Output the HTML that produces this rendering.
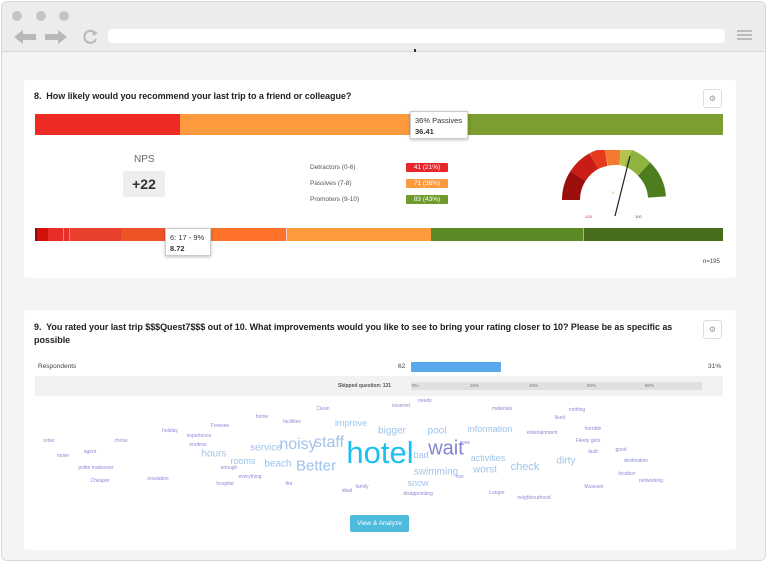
<!DOCTYPE html>
<html><head><meta charset="utf-8"><style>
*{margin:0;padding:0;box-sizing:border-box}
body{width:768px;height:542px;overflow:hidden;background:#fff;font-family:"Liberation Sans",sans-serif;position:relative;color:#333}
.a{position:absolute}
.frame{left:1px;top:1px;width:765px;height:560px;border:1px solid #d8d8d8;border-radius:6px;background:#f4f4f4}
.top{left:2px;top:2px;width:763px;height:50px;background:#ececec;border-bottom:1px solid #d6d6d6;border-radius:5px 5px 0 0}
.dot{width:10px;height:10px;border-radius:50%;background:#c4c4c4;top:11px}
.card{background:#fff;border-radius:3px;left:24px;width:712px}
.t{font-size:9px;font-weight:bold;color:#222;letter-spacing:-.05px}
.gear{width:19px;height:19px;border:1px solid #ddd;border-radius:3px;background:#fff;font-size:8px;color:#999;text-align:center;line-height:17px}
.tip{background:#fff;border:1px solid #ccc;box-shadow:0 1px 3px rgba(0,0,0,.25);font-size:7.5px;padding:3px 4px;line-height:11px;color:#333}
.lg{font-size:6.5px;color:#555}
.bd{width:42px;height:9px;color:#fff;font-size:6.5px;text-align:center;line-height:9px;border-radius:1px}
.w{transform:translate(-50%,-50%);white-space:nowrap;font-size:5px;color:#8b8bd6}
.b{color:#9ec3ec}
</style></head><body>
<div class="a frame"></div>
<div class="a top"></div>
<div class="a dot" style="left:12px"></div>
<div class="a dot" style="left:36px"></div>
<div class="a dot" style="left:59px"></div>
<svg class="a" style="left:12px;top:28px" width="90" height="18" viewBox="0 0 90 18">
<path d="M2 9 L11 2 V6 H24 V12 H11 V16 Z" fill="#b8b8b8"/>
<path d="M55 9 L46 2 V6 H33 V12 H46 V16 Z" fill="#b8b8b8"/>
<path d="M83 5 A6 6 0 1 0 84 11" fill="none" stroke="#bbb" stroke-width="2.2"/>
<path d="M80 2 L86 5 L81 8Z" fill="#bbb"/>
</svg>
<div class="a" style="left:108px;top:29px;width:617px;height:14px;background:#fff;border-radius:3px"></div>
<div class="a" style="left:737px;top:30px;width:15px;height:2px;background:#bbb;box-shadow:0 4px 0 #bbb,0 8px 0 #bbb"></div>
<div class="a" style="left:414px;top:49px;width:2px;height:3px;background:#333"></div>

<!-- card 1 -->
<div class="a card" style="top:80px;height:198px"></div>
<div class="a t" style="left:34px;top:91px">8.&nbsp; How likely would you recommend your last trip to a friend or colleague?</div>
<div class="a gear" style="left:703px;top:89px">⚙</div>
<div class="a" style="left:35px;top:114px;width:145px;height:21px;background:#ee2a24"></div>
<div class="a" style="left:180px;top:114px;width:232px;height:21px;background:#fd9a3e"></div>
<div class="a" style="left:466px;top:114px;width:257px;height:21px;background:#7c9d2f"></div>
<div class="a tip" style="left:410px;top:111px;width:58px;height:28px">36% Passives<br><b>36.41</b></div>

<div class="a" style="left:134px;top:154px;font-size:10px;color:#666">NPS</div>
<div class="a" style="left:123px;top:171px;width:42px;height:26px;background:#eee;border-radius:3px;font-size:14px;font-weight:bold;text-align:center;line-height:26px;color:#333">+22</div>

<div class="a lg" style="left:310px;top:164px">Detractors (0-6)</div>
<div class="a lg" style="left:310px;top:180px">Passives (7-8)</div>
<div class="a lg" style="left:310px;top:196px">Promoters (9-10)</div>
<div class="a bd" style="left:406px;top:163px;background:#e8262a">41 (21%)</div>
<div class="a bd" style="left:406px;top:179px;background:#fd9a3e">71 (36%)</div>
<div class="a bd" style="left:406px;top:195px;background:#6f9a2c">83 (43%)</div>

<svg class="a" style="left:558px;top:150px" width="115" height="70" viewBox="0 0 115 70">
<g fill="none" stroke-width="18">
<path d="M13 50 A44 44 0 0 1 20 26" stroke="#9c0e0e"/>
<path d="M20 26 A44 44 0 0 1 36 11" stroke="#c91c16"/>
<path d="M36 11 A44 44 0 0 1 48 7" stroke="#e63a1e"/>
<path d="M48 7 A44 44 0 0 1 62 6" stroke="#f47a30"/>
<path d="M62 6 A44 44 0 0 1 70 8" stroke="#b7c24a"/>
<path d="M70 8 A44 44 0 0 1 86 19" stroke="#8fb33c"/>
<path d="M86 19 A44 44 0 0 1 99 47" stroke="#4e7d1f"/>
</g>
<text x="26" y="68" font-size="4" fill="#c33">-100</text>
<text x="54" y="44" font-size="4" fill="#f80">0</text>
<text x="77" y="68" font-size="4" fill="#555">100</text>
<line x1="72" y1="6" x2="57" y2="66" stroke="#222" stroke-width="1.2"/>
</svg>

<div class="a" style="left:35px;top:228px;width:688px;height:13px;display:flex">
<div style="width:2px;background:#8a0f0c"></div><div style="width:11px;background:#d2110c"></div><div style="width:16px;background:#e82d27;border-right:1px solid #f77"></div><div style="width:6px;background:#e62f28;border-right:1px solid #f77"></div><div style="width:51px;background:#e8402c"></div><div style="width:44px;background:#ec5326"></div><div style="width:46px"></div><div style="width:75px;background:#fe7128"></div><div style="width:145px;background:#fd9a3e;border-left:1px solid #fcc"></div><div style="width:152px;background:#5c8b25"></div><div style="width:140px;background:#476d1c;border-left:1px solid #9b9"></div>
</div>
<div class="a tip" style="left:165px;top:228px;width:46px;height:28px">6: 17 - 9%<br><b>8.72</b></div>
<div class="a" style="left:703px;top:259px;font-size:6px;color:#444">n=195</div>

<!-- card 2 -->
<div class="a card" style="top:310px;height:240px"></div>
<div class="a t" style="left:34px;top:321px;width:650px;line-height:13px">9.&nbsp; You rated your last trip $$$Quest7$$$ out of 10. What improvements would you like to see to bring your rating closer to 10? Please be as specific as possible</div>
<div class="a gear" style="left:703px;top:320px">⚙</div>
<div class="a" style="left:38px;top:363px;font-size:6.5px;color:#444">Respondents</div>
<div class="a" style="left:398px;top:363px;font-size:6.5px;color:#444">62</div>
<div class="a" style="left:411px;top:362px;width:90px;height:10px;background:#5aa8ec;border-radius:1px"></div>
<div class="a" style="left:708px;top:363px;font-size:6.5px;color:#444">31%</div>
<div class="a" style="left:35px;top:376px;width:688px;height:20px;background:#f2f2f2"></div>
<div class="a" style="left:338px;top:383px;font-size:5px;font-weight:bold;color:#555">Skipped question: 131</div>
<div class="a" style="left:411px;top:382px;width:291px;height:8px;background:#e0e0e0"></div>
<div class="a" style="left:412px;top:383px;font-size:4.5px;color:#777;width:280px">
<span class="a" style="left:0">0%</span><span class="a" style="left:58px">20%</span><span class="a" style="left:117px">40%</span><span class="a" style="left:175px">60%</span><span class="a" style="left:233px">80%</span></div>

<div class="a w" style="left:425px;top:401px">needs</div>
<div class="a w" style="left:401px;top:406px">lowered</div>
<div class="a w" style="left:323px;top:409px">Clean</div>
<div class="a w" style="left:502px;top:409px">materials</div>
<div class="a w" style="left:577px;top:410px">nothing</div>
<div class="a w" style="left:262px;top:417px">home</div>
<div class="a w" style="left:292px;top:422px">facilities</div>
<div class="a w b" style="left:351px;top:423px;font-size:9px">improve</div>
<div class="a w" style="left:560px;top:418px">liked</div>
<div class="a w" style="left:220px;top:426px">Foresee</div>
<div class="a w" style="left:170px;top:431px">holiday</div>
<div class="a w b" style="left:392px;top:431px;font-size:10px">bigger</div>
<div class="a w b" style="left:437px;top:431px;font-size:10px">pool</div>
<div class="a w b" style="left:490px;top:429px;font-size:9px">information</div>
<div class="a w" style="left:542px;top:433px">entertainment</div>
<div class="a w" style="left:593px;top:429px">horrible</div>
<div class="a w" style="left:199px;top:436px">experience</div>
<div class="a w" style="left:49px;top:441px">order</div>
<div class="a w" style="left:121px;top:441px">chose</div>
<div class="a w" style="left:588px;top:441px">Fleety gets</div>
<div class="a w" style="left:198px;top:445px">endless</div>
<div class="a w" style="left:466px;top:443px">one</div>
<div class="a w b" style="left:266px;top:448px;font-size:10px">service</div>
<div class="a w b" style="left:298px;top:445px;font-size:16px">noisy</div>
<div class="a w b" style="left:329px;top:443px;font-size:16px">staff</div>
<div class="a w" style="left:380px;top:453px;font-size:31px;color:#1bc0ee">hotel</div>
<div class="a w" style="left:446px;top:449px;font-size:20px;color:#7f86cf">wait</div>
<div class="a w b" style="left:421px;top:455px;font-size:9px">bad</div>
<div class="a w b" style="left:488px;top:458px;font-size:9px">activities</div>
<div class="a w b" style="left:566px;top:461px;font-size:10px">dirty</div>
<div class="a w" style="left:593px;top:452px">fault</div>
<div class="a w" style="left:621px;top:450px">good</div>
<div class="a w" style="left:90px;top:452px">agent</div>
<div class="a w" style="left:63px;top:456px">noise</div>
<div class="a w b" style="left:214px;top:454px;font-size:10px">hours</div>
<div class="a w b" style="left:243px;top:461px;font-size:9px">rooms</div>
<div class="a w b" style="left:278px;top:464px;font-size:10px">beach</div>
<div class="a w b" style="left:316px;top:466px;font-size:15px">Better</div>
<div class="a w b" style="left:436px;top:472px;font-size:10px">swimming</div>
<div class="a w b" style="left:485px;top:470px;font-size:10px">worst</div>
<div class="a w b" style="left:525px;top:467px;font-size:11px">check</div>
<div class="a w" style="left:636px;top:461px">destination</div>
<div class="a w" style="left:96px;top:468px">polite makeover</div>
<div class="a w" style="left:229px;top:468px">enough</div>
<div class="a w" style="left:250px;top:477px">everything</div>
<div class="a w" style="left:460px;top:477px">run</div>
<div class="a w" style="left:627px;top:474px">location</div>
<div class="a w" style="left:100px;top:481px">Cheaper</div>
<div class="a w" style="left:158px;top:479px">insulation</div>
<div class="a w" style="left:225px;top:484px">hospital</div>
<div class="a w" style="left:289px;top:484px">fire</div>
<div class="a w b" style="left:418px;top:483px;font-size:9px">snow</div>
<div class="a w" style="left:651px;top:481px">networking</div>
<div class="a w" style="left:362px;top:487px">family</div>
<div class="a w" style="left:347px;top:491px">ideal</div>
<div class="a w" style="left:594px;top:487px">Museum</div>
<div class="a w" style="left:418px;top:494px">disappointing</div>
<div class="a w" style="left:497px;top:493px">Longer</div>
<div class="a w" style="left:534px;top:498px">neighbourhood</div>

<div class="a" style="left:350px;top:515px;width:59px;height:17px;background:#4fbbdc;border-radius:2px;color:#fff;font-size:6.5px;text-align:center;line-height:17px">View &amp; Analyze</div>
</body></html>
